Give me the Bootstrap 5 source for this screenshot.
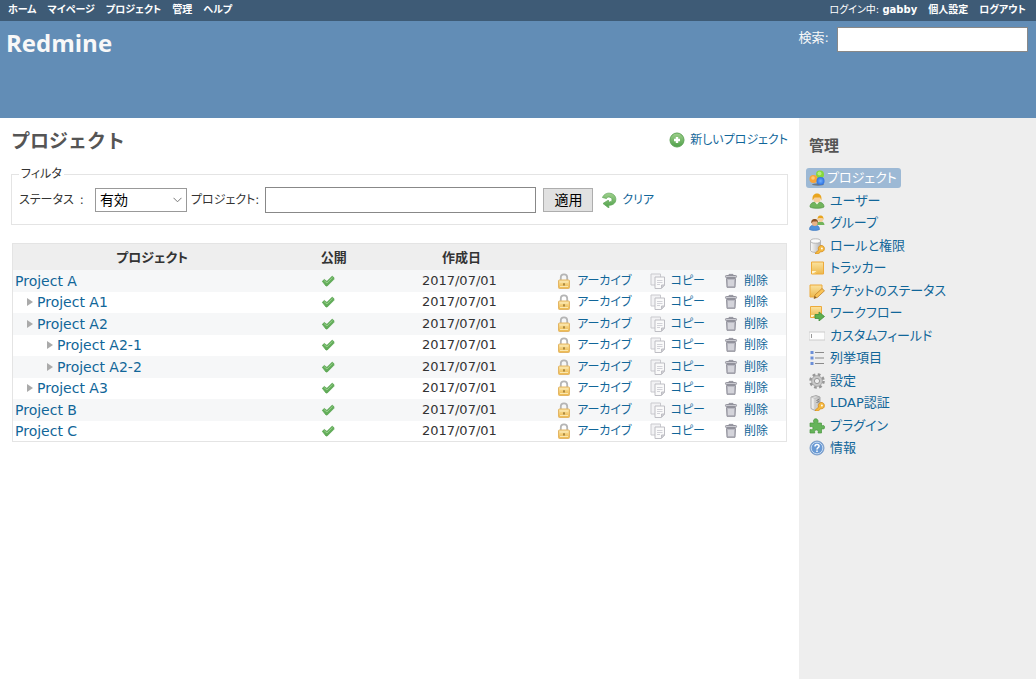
<!DOCTYPE html>
<html lang="ja">
<head>
<meta charset="utf-8">
<meta name="viewport" content="width=device-width, initial-scale=1">
<title>プロジェクト - Redmine</title>
<link href="https://cdn.jsdelivr.net/npm/bootstrap@5.3.0/dist/css/bootstrap.min.css" rel="stylesheet">
<style>
  :root { --rm-link: #169; --rm-line: #e4e4e4; }
  body { font: 13px/16px "DejaVu Sans", "Noto Sans CJK JP", sans-serif; font-feature-settings: "palt"; color: #333; background: #fff; }
  a { color: var(--rm-link); text-decoration: none; }
  a:hover { color: #c61a1a; text-decoration: underline; }
  .ico { width: 16px; height: 16px; flex: none; display: block; }
  .act { display: inline-flex; align-items: center; gap: 5px; white-space: nowrap; }
  .content .act { font-size: 12px; }

  .topbar { background: #3e5b76; color: #fff; height: 21px; padding: 0 10px 2px 8px; font-size: 10px; white-space: nowrap; }
  .topbar a { color: #fff; font-weight: 700; }
  .topbar nav { gap: 11px; }
  .site-head { background: #628db6; color: #f8f8f8; min-height: 97px; padding: 6px 8px 0 6px; }
  .site-head h1 { font: 700 24px/32px "Open Sans", sans-serif; }
  .site-head label { font-size: 13px; line-height: 22px; }
  .field { border: 1px solid #888; background: #fff; padding: 0 4px; border-radius: 0; min-width: 0; }
  .q { width: 191px; height: 25px; }

  .content { padding: 10px 11px 24px; }
  .content h2 { font: 700 19px/24px "Noto Sans CJK JP", sans-serif; color: #555; }
  fieldset { border: 1px solid var(--rm-line); padding: 5px 7px 11px; margin: 14px 0 18px; }
  fieldset label { font-size: 12px; }
  .status-label { min-width: 76px; }
  legend { float: none; width: auto; font-size: 12px; line-height: 16px; padding: 0 2px; margin: 0; }
  .status-select { width: 92px; height: 24px; border: 1px solid #999; border-radius: 0; padding: 0 4px; color: #000; font-size: 14px; appearance: none;
    background: #fff url("data:image/svg+xml,%3Csvg xmlns='http://www.w3.org/2000/svg' width='9' height='6'%3E%3Cpath d='M.5.8l4 4 4-4' fill='none' stroke='%23777'/%3E%3C/svg%3E") no-repeat right 4px center; }
  .name-field { width: 271px; height: 26px; margin: 0 7px 0 6px; }
  .apply { height: 24px; border: 1px solid #adadad; background: #e1e1e1; color: #000; padding: 0 10px; font-size: 14px; line-height: 18px; }

  .tbl-wrap { padding: 0 1px; }
  .projects { border: 1px solid var(--rm-line); table-layout: fixed; width: 100%; }
  .projects th { background: #eee; text-align: center; height: 26px; padding: 2px 0 0; }
  .projects td { height: 22px; padding: 0 2px; text-align: center; line-height: 16px; white-space: nowrap; }
  .projects tbody tr:nth-child(even) td { height: 21px; }
  .projects tbody tr:nth-child(odd) { background: #f6f7f8; }
  .projects td.title { text-align: left; font-size: 14px; }
  .projects td.shown { padding-right: 14px; }
  .projects td.date { padding-right: 6px; }
  .ico-check { margin: 0 auto; }
  .lv1::before, .lv2::before { content: ""; display: inline-block; border: 4px solid transparent; border-left: 6px solid #aaa; border-right: 0; margin: 0 4px 1px 12px; }
  .lv2::before { margin-left: 32px; }
  .acts { gap: 18px; padding-right: 16px; }

  .side { width: 237px; background: #eee; padding: 18px 7px; }
  .side h3 { font: 700 15px/18px "Noto Sans CJK JP", sans-serif; color: #555; margin: 0 0 13px 3px; }
  .side li { height: 22px; display: flex; align-items: center; }
  .side li:nth-child(even) { height: 23px; }
  .side li a { padding: 2px 4px 2px 3px; }
  .side .selected { background: #9db9d5; color: #fff; border-radius: 3px; gap: 2px; }
</style>
</head>
<body class="d-flex flex-column min-vh-100">

<svg class="position-absolute" width="0" height="0" aria-hidden="true">
  <defs>
    <linearGradient id="gGreen" x2="0" y2="1"><stop stop-color="#9fd08c"/><stop offset="1" stop-color="#4fa04a"/></linearGradient>
    <linearGradient id="gGold" x2="0" y2="1"><stop stop-color="#fbe3a0"/><stop offset="1" stop-color="#ecb84d"/></linearGradient>
    <linearGradient id="gGrey" x2="1" y2="0"><stop stop-color="#fafafa"/><stop offset="1" stop-color="#b4b4b4"/></linearGradient>
    <radialGradient id="gBlue"><stop stop-color="#6fb0ff"/><stop offset="1" stop-color="#2c70e0"/></radialGradient>
  </defs>
  <symbol id="add" viewBox="0 0 16 16"><circle cx="8" cy="8" r="7" fill="url(#gGreen)" stroke="#5fa558"/><path d="M8 5v6M5 8h6" stroke="#fff" stroke-width="2.4"/></symbol>
  <symbol id="reload" viewBox="0 0 16 16"><path d="M1.500 5.500C3 2 6 1 8.500 1.200c4 .3 6.500 3 6.300 6.500-.2 3.600-3 5.600-7 5.500V16L2 11.500 7.500 8v2c2 .2 3.600-.7 3.500-2.300C11 6 9.500 5 7.800 5 6.500 5 6 5.500 5.500 6.500z" fill="url(#gGreen)" stroke="#62a85a" stroke-width=".8"/><path d="M6 7.500h4" stroke="#fff" stroke-width="1.200"/></symbol>
  <symbol id="check" viewBox="0 0 16 16"><path d="M2.300 8.300l2-1.800 2.600 1.900 5.300-5.200 1.700 1.400v1.700L7.200 13H6z" fill="#62ad59" stroke="#58a34f" stroke-width=".8" stroke-linejoin="round"/><path d="M4 7.600l3 2.400 5.700-5.500" fill="none" stroke="#94ce88"/></symbol>
  <symbol id="lock" viewBox="0 0 16 16"><path d="M4.800 8V4.500a3.200 3.200 0 016.400 0V8" fill="none" stroke="#b5b5b5" stroke-width="1.800"/><rect x="2.500" y="7" width="11" height="8.500" rx="1" fill="url(#gGold)" stroke="#e3b565"/><path d="M4 9h8M4 13.500h8" stroke="#fdf0c6" stroke-width=".8"/><path d="M8 10.200v2.300" stroke="#9b7a35" stroke-width="1.600"/></symbol>
  <symbol id="copy" viewBox="0 0 16 16"><path d="M1 1h9.500v11H1z" fill="#f2f2f4" stroke="#c9c9ce"/><path d="M5 4h9.500v8l-3 3.500H5z" fill="#fafafa" stroke="#bebec4"/><path d="M7 7.500h5.500M7 9.500h5.500M7 11.500h3" stroke="#d2d2d8"/><path d="M14.500 12h-3v3z" fill="#d8d8dd" stroke="#bebec4"/></symbol>
  <symbol id="trash" viewBox="0 0 16 16"><path d="M6 2.500V1.400h4v1.100" fill="none" stroke="#92929c"/><rect x="2.500" y="2.500" width="11" height="2" rx=".8" fill="#c9c9d0" stroke="#92929c"/><path d="M3.500 5.500h9l-.5 8.800H4z" fill="#b9b9c2" stroke="#92929c"/><path d="M6 7v6M8 7v6M10 7v6" stroke="#eeeef2"/></symbol>
  <symbol id="balls" viewBox="0 0 16 16"><ellipse cx="9" cy="14.500" rx="6" ry="1.200" fill="#6c7a86"/><circle cx="11" cy="4.500" r="4" fill="#86d83c"/><circle cx="4.500" cy="9" r="4" fill="#f8a438"/><circle cx="11.500" cy="11" r="4" fill="url(#gBlue)"/><circle cx="10.500" cy="3.500" r="2" fill="#b4ef7c"/><circle cx="4" cy="8" r="1.800" fill="#ffc878"/></symbol>
  <symbol id="user" viewBox="0 0 16 16"><path d="M1 14c0-4 3-5 7-5s7 1 7 5c-2 1.700-12 1.700-14 0z" fill="#72b45c" stroke="#529442" stroke-width=".7"/><path d="M6 9l2 2.500L10 9z" fill="#fff"/><rect x="4.500" y="2.500" width="7" height="7" rx="3" fill="#f6cf9c"/><path d="M3.600 7.500C3 2.500 5 .5 8 .5s5 2 4.400 7L11 4.500H5.500z" fill="#e9a51e"/></symbol>
  <symbol id="group" viewBox="0 0 16 16"><path d="M7.500 10c0-2.500 2-3.500 4-3.500s4 1 4 3.500z" fill="#72b45c"/><rect x="9" y="2" width="5" height="5" rx="2" fill="#f6cf9c"/><path d="M8.500 5C8.500 1.500 9.500.5 11.500.5s3 1 3 4.500l-1-2h-4z" fill="#e9a51e"/><path d="M.5 14.500c0-3.500 2.500-4.500 5-4.500s5 1 5 4.500c-2 1.300-8 1.300-10 0z" fill="#4f92dc" stroke="#3471bb" stroke-width=".6"/><rect x="3" y="5.500" width="5.500" height="5.500" rx="2.500" fill="#e8b388"/><path d="M2.300 8.500C2 5 3.500 4 5.700 4S9.300 5 9 8.500L8 6.500H4z" fill="#8b5325"/></symbol>
  <symbol id="keymark" viewBox="0 0 16 16"><path d="M15.300 11a3 3 0 10-5.500 1L6.500 14.800V16h2.700l2.500-2.200c2.100.2 3.600-1 3.600-2.800z" fill="#f5b93f" stroke="#d58d1c" stroke-width=".8"/><circle cx="12.900" cy="10.500" r=".9" fill="#fff"/></symbol>
  <symbol id="roles" viewBox="0 0 16 16"><path d="M1.500 3v9.500c1 2.500 9 2.500 10 0V3z" fill="url(#gGrey)" stroke="#aaa" stroke-width=".8"/><ellipse cx="6.500" cy="3" rx="5" ry="2.200" fill="#fafafa" stroke="#aaa" stroke-width=".8"/><use href="#keymark"/></symbol>
  <symbol id="note" viewBox="0 0 16 16"><path d="M2.500 2h12v12h-12z" fill="url(#gGold)" stroke="#edaa3a"/><path d="M3 11h4.500l-3 2.500H3z" fill="#fff4cf"/><path d="M4 13.500c3 0 4-1 4-3" fill="none" stroke="#f7ca63"/></symbol>
  <symbol id="noteedit" viewBox="0 0 16 16"><path d="M1 2h12v7l-5 5H1z" fill="url(#gGold)" stroke="#edaa3a"/><path d="M5 15.500l1-3.500 7-6.500 2.500 2.300-7 6.500z" fill="#f9c356" stroke="#bf8128" stroke-width=".8"/><path d="M5 15.500l.8-2.500 1.700 1.500z" fill="#76532a"/></symbol>
  <symbol id="flow" viewBox="0 0 16 16"><path d="M1.500 1.500h11v11h-11z" fill="url(#gGold)" stroke="#edaa3a"/><path d="M2 10h4l-2.500 2H2z" fill="#fff4cf"/><path d="M6 9.500h4V7l5.500 4.500L10 16v-2.500H6z" fill="#5dae50" stroke="#43913a" stroke-width=".8"/></symbol>
  <symbol id="textfield" viewBox="0 0 16 16"><path d="M0 4h16v8H0z" fill="#fdfdfd" stroke="#ccc"/><path d="M2.500 6v4" stroke="#999"/></symbol>
  <symbol id="list" viewBox="0 0 16 16"><path d="M1.500 2.500h3M1.500 8h3M1.500 13.500h3" stroke="#6c8fd8" stroke-width="2.800"/><path d="M6 2.500h9M6 8h9M6 13.500h9" stroke="#8a8a8a" stroke-width="1.200"/></symbol>
  <symbol id="gear" viewBox="0 0 16 16"><circle cx="8" cy="8" r="6.500" fill="none" stroke="#969696" stroke-width="2.600" stroke-dasharray="2.700 2.400"/><circle cx="8" cy="8" r="5.400" fill="#c8c8c8" stroke="#a0a0a0" stroke-width=".8"/><circle cx="8" cy="8" r="2.600" fill="#eee" stroke="#999"/></symbol>
  <symbol id="server" viewBox="0 0 16 16"><path d="M2 2l5-1.500L11 2v11.500l-5 2-4-2z" fill="url(#gGrey)" stroke="#999" stroke-width=".8"/><path d="M2 2l4 1.500V15.500M6 3.500L11 2" fill="none" stroke="#bbb" stroke-width=".8"/><path d="M7.500 5.500l2.500-1M7.500 7.500l2.500-1" stroke="#777"/><use href="#keymark"/></symbol>
  <symbol id="puzzle" viewBox="0 0 16 16"><path d="M1 5h4.200C3.500 2.500 5 .8 6.700.8S10 2.500 8.500 5h4v3c2-1.300 3.200-.2 3.200 1.200s-1.200 2.600-3.200 1.300V15H9c.8-2.300-.4-3-1.600-3S5 12.900 5.800 15H1v-3.500c2 .8 3-.3 3-1.400S3 8 1 8.700z" fill="#65b45a" stroke="#4a963f" stroke-width=".7"/></symbol>
  <symbol id="help" viewBox="0 0 16 16"><circle cx="8" cy="8" r="7" fill="#6a9ad4" stroke="#7f9fc8"/><circle cx="8" cy="8" r="5.800" fill="none" stroke="#c4d9f1"/><path d="M6 6.500C6 4.800 7 4.400 8 4.400s2.100.6 2.100 1.900C10.100 7.600 8 7.800 8 9.400M8 10.600v1.500" fill="none" stroke="#fff" stroke-width="1.500"/></symbol>
</svg>

<div class="topbar d-flex justify-content-between align-items-center">
  <nav class="d-flex" aria-label="メイン"><a href="#">ホーム</a><a href="#">マイページ</a><a href="#">プロジェクト</a><a href="#">管理</a><a href="#">ヘルプ</a></nav>
  <nav class="d-flex" aria-label="アカウント"><span>ログイン中: <a href="#">gabby</a></span><a href="#">個人設定</a><a href="#">ログアウト</a></nav>
</div>

<header class="site-head d-flex justify-content-between align-items-start">
  <h1 class="m-0">Redmine</h1>
  <form class="d-flex gap-2"><label for="q">検索:</label><input class="field q" id="q" type="text"></form>
</header>

<div class="d-flex flex-grow-1">
  <main class="content flex-grow-1">
    <div class="d-flex justify-content-between align-items-center">
      <h2 class="m-0">プロジェクト</h2>
      <a class="act" href="#"><svg class="ico"><use href="#add"/></svg>新しいプロジェクト</a>
    </div>
    <form>
      <fieldset>
        <legend>フィルタ</legend>
        <div class="d-flex align-items-center">
          <label for="status" class="status-label">ステータス&ensp;:</label>
          <select id="status" class="status-select me-1"><option>有効</option></select>
          <label for="name">プロジェクト:</label>
          <input id="name" class="field name-field" type="text">
          <button type="submit" class="apply me-2">適用</button>
          <a class="act" href="#"><svg class="ico"><use href="#reload"/></svg>クリア</a>
        </div>
      </fieldset>
    </form>
    <div class="tbl-wrap">
    <table class="projects">
      <colgroup><col style="width:36%"><col style="width:11%"><col style="width:22%"><col></colgroup>
      <thead><tr><th scope="col">プロジェクト</th><th scope="col">公開</th><th scope="col">作成日</th><th></th></tr></thead>
      <tbody id="rows"></tbody>
    </table>
    </div>
  </main>

  <aside class="side flex-shrink-0">
    <h3>管理</h3>
    <ul class="list-unstyled m-0">
      <li><a class="act selected" href="#"><svg class="ico"><use href="#balls"/></svg>プロジェクト</a></li>
      <li><a class="act" href="#"><svg class="ico"><use href="#user"/></svg>ユーザー</a></li>
      <li><a class="act" href="#"><svg class="ico"><use href="#group"/></svg>グループ</a></li>
      <li><a class="act" href="#"><svg class="ico"><use href="#roles"/></svg>ロールと権限</a></li>
      <li><a class="act" href="#"><svg class="ico"><use href="#note"/></svg>トラッカー</a></li>
      <li><a class="act" href="#"><svg class="ico"><use href="#noteedit"/></svg>チケットのステータス</a></li>
      <li><a class="act" href="#"><svg class="ico"><use href="#flow"/></svg>ワークフロー</a></li>
      <li><a class="act" href="#"><svg class="ico"><use href="#textfield"/></svg>カスタムフィールド</a></li>
      <li><a class="act" href="#"><svg class="ico"><use href="#list"/></svg>列挙項目</a></li>
      <li><a class="act" href="#"><svg class="ico"><use href="#gear"/></svg>設定</a></li>
      <li><a class="act" href="#"><svg class="ico"><use href="#server"/></svg>LDAP認証</a></li>
      <li><a class="act" href="#"><svg class="ico"><use href="#puzzle"/></svg>プラグイン</a></li>
      <li><a class="act" href="#"><svg class="ico"><use href="#help"/></svg>情報</a></li>
    </ul>
  </aside>
</div>

<script src="https://cdn.jsdelivr.net/npm/bootstrap@5.3.0/dist/js/bootstrap.bundle.min.js"></script>
<script>
  const projects = [["Project A", 0], ["Project A1", 1], ["Project A2", 1], ["Project A2-1", 2], ["Project A2-2", 2], ["Project A3", 1], ["Project B", 0], ["Project C", 0]];
  const action = (icon, text) => `<a class="act" href="#"><svg class="ico"><use href="#${icon}"/></svg>${text}</a>`;
  document.getElementById("rows").innerHTML = projects.map(([name, level]) => `<tr>
    <td class="title lv${level}"><a href="#">${name}</a></td>
    <td class="shown"><svg class="ico ico-check"><use href="#check"/></svg></td>
    <td class="date">2017/07/01</td>
    <td><div class="acts d-flex justify-content-end">${action("lock", "アーカイブ")}${action("copy", "コピー")}${action("trash", "削除")}</div></td>
  </tr>`).join("");
</script>
</body>
</html>
